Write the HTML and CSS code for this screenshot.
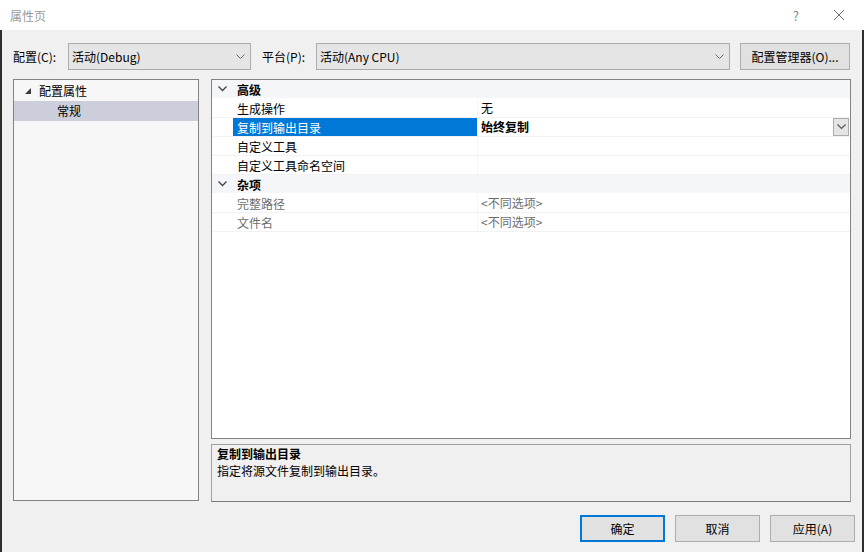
FILE: index.html
```html
<!DOCTYPE html>
<html>
  <head>
    <meta charset="utf-8" />
    <title>属性页</title>
    <link rel="stylesheet" href="styles.css">
  </head>
  <body>
    <!-- title bar -->
    <div class="titlebar">
      <span class="title">属性页</span>
      <span class="help">?</span>
      <svg class="close" width="12" height="12" viewBox="0 0 12 12">
        <path d="M1 1 L11 11 M11 1 L1 11" stroke="#6e6e6e" stroke-width="1" fill="none" />
      </svg>
    </div>

    <div class="dialog">
      <!-- configuration / platform -->
      <div class="config">
        <label class="config-label">配置(C):</label>
        <div class="combo combo-config">
          <span>活动(Debug)</span>
          <svg width="9" height="6" viewBox="0 0 9 6"><path d="M0.5 0.5 L4.5 4.5 L8.5 0.5" stroke="#6a6a6a" fill="none" /></svg>
        </div>
        <label class="config-label platform-label">平台(P):</label>
        <div class="combo combo-platform">
          <span>活动(Any CPU)</span>
          <svg width="9" height="6" viewBox="0 0 9 6"><path d="M0.5 0.5 L4.5 4.5 L8.5 0.5" stroke="#6a6a6a" fill="none" /></svg>
        </div>
        <button class="btn btn-manager">配置管理器(O)...</button>
      </div>

      <div class="main">
        <!-- left tree -->
        <div class="tree">
          <div class="tree-row">
            <svg class="tree-arrow" width="6" height="6" viewBox="0 0 6 6"><polygon points="6,0 6,6 0,6" fill="#3c3c3c" /></svg>
            <span>配置属性</span>
          </div>
          <div class="tree-row child selected">常规</div>
        </div>

        <div class="side">
          <!-- property grid -->
          <div class="grid">
            <div class="cat">
              <span class="gutter"><svg width="9" height="6" viewBox="0 0 9 6"><path d="M0.5 0.5 L4.5 4.5 L8.5 0.5" stroke="#444" stroke-width="1.3" fill="none" /></svg></span>
              <span class="cat-name">高级</span>
            </div>
            <div class="prop">
              <span class="gutter"></span>
              <span class="name">生成操作</span>
              <span class="value">无</span>
            </div>
            <div class="prop">
              <span class="gutter"></span>
              <span class="name active">复制到输出目录</span>
              <span class="value strong">
                <span class="value-text">始终复制</span>
                <span class="drop"><svg width="9" height="6" viewBox="0 0 9 6"><path d="M0.5 0.5 L4.5 4.5 L8.5 0.5" stroke="#555" stroke-width="1.2" fill="none" /></svg></span>
              </span>
            </div>
            <div class="prop">
              <span class="gutter"></span>
              <span class="name">自定义工具</span>
              <span class="value"></span>
            </div>
            <div class="prop">
              <span class="gutter"></span>
              <span class="name">自定义工具命名空间</span>
              <span class="value"></span>
            </div>
            <div class="cat">
              <span class="gutter"><svg width="9" height="6" viewBox="0 0 9 6"><path d="M0.5 0.5 L4.5 4.5 L8.5 0.5" stroke="#444" stroke-width="1.3" fill="none" /></svg></span>
              <span class="cat-name">杂项</span>
            </div>
            <div class="prop disabled">
              <span class="gutter"></span>
              <span class="name">完整路径</span>
              <span class="value">&lt;不同选项&gt;</span>
            </div>
            <div class="prop disabled">
              <span class="gutter"></span>
              <span class="name">文件名</span>
              <span class="value">&lt;不同选项&gt;</span>
            </div>
          </div>

          <!-- description -->
          <div class="desc">
            <div class="desc-title">复制到输出目录</div>
            <div class="desc-text">指定将源文件复制到输出目录。</div>
          </div>
        </div>
      </div>

      <div class="buttons">
        <button class="btn btn-default">确定</button>
        <button class="btn">取消</button>
        <button class="btn">应用(A)</button>
      </div>
    </div>
  </body>
</html>
```

FILE: styles.css
```css
body {
  font-family: "Noto Sans CJK SC", sans-serif;
  font-size: 12px;
  color: #000;
  margin: 0;
  width: 864px;
  height: 552px;
  overflow: hidden;
  background: #f0f0f0;
}
.titlebar {
  height: 30px;
  background: #fff;
  display: flex;
  align-items: center;
  padding: 0 0 0 10px;
  color: #9a9a9a;
}
.title {
  flex: 1;
}
.help {
  color: #8a8a8a;
  font-size: 13px;
  margin-right: 34px;
}
.close {
  margin-right: 19px;
}
.dialog {
  height: 522px;
  box-sizing: border-box;
  border-left: 2px solid #2e2e2e;
  border-right: 2px solid #2e2e2e;
  padding: 13px 11px 0 11px;
}
.config {
  display: flex;
  align-items: center;
  height: 27px;
}
.config-label {
  width: 55px;
}
.platform-label {
  margin-left: 11px;
  width: 54px;
}
.combo {
  height: 27px;
  box-sizing: border-box;
  border: 1px solid #acacac;
  background: #e5e5e5;
  display: flex;
  align-items: center;
  justify-content: space-between;
  padding: 0 5px 0 3px;
}
.combo-config {
  width: 183px;
}
.combo-platform {
  width: 414px;
}
.btn {
  font-family: inherit;
  font-size: 12px;
  color: #000;
  height: 27px;
  box-sizing: border-box;
  border: 1px solid #adadad;
  background: #e1e1e1;
  padding: 0;
}
.btn-manager {
  width: 110px;
  margin-left: 10px;
}
.main {
  display: flex;
  gap: 12px;
  margin-top: 9px;
}
.tree {
  width: 186px;
  height: 422px;
  box-sizing: border-box;
  border: 1px solid #828282;
  background: #f7f7f7;
  padding-top: 1px;
}
.tree-row {
  display: flex;
  align-items: center;
  height: 20px;
  line-height: 18px;
  padding-left: 11px;
}
.tree-arrow {
  margin-right: 8px;
}
.tree-row.child {
  padding-left: 43px;
}
.tree-row.selected {
  background: #cccedb;
}
.side {
  width: 640px;
  display: flex;
  flex-direction: column;
  gap: 5px;
}
.grid {
  height: 360px;
  box-sizing: border-box;
  border: 1px solid #828282;
  background: #fff;
}
.cat,
.prop {
  display: flex;
  height: 19px;
  line-height: 20px;
  box-sizing: border-box;
  border-bottom: 1px solid #f2f2f2;
}
.cat {
  background: #f4f6f9;
  border-bottom-color: #fff;
  font-weight: bold;
}
.gutter {
  width: 21px;
  display: flex;
  align-items: center;
  justify-content: center;
  flex: none;
}
.cat-name {
  padding-left: 4px;
}
.name {
  width: 245px;
  padding-left: 4px;
  box-sizing: border-box;
  flex: none;
  border-right: 1px solid #f6f6f6;
}
.name.active {
  background: #0078d7;
  color: #fff;
}
.value {
  flex: 1;
  display: flex;
  align-items: center;
  padding-left: 3px;
}
.value.strong {
  font-weight: bold;
}
.value-text {
  flex: 1;
}
.drop {
  width: 16px;
  height: 18px;
  box-sizing: border-box;
  border: 1px solid #acacac;
  background: #e5e5e5;
  display: flex;
  align-items: center;
  justify-content: center;
  margin-right: 1px;
}
.prop.disabled {
  color: #6d6d6d;
}
.desc {
  height: 58px;
  box-sizing: border-box;
  border: 1px solid #a0a0a0;
  border-bottom-color: #7a7a7a;
  background: #f0f0f0;
  padding: 0 5px;
  line-height: 17px;
}
.desc-title {
  font-weight: bold;
}
.buttons {
  display: flex;
  justify-content: flex-end;
  gap: 10px;
  margin-top: 13px;
  margin-right: -4px;
}
.buttons .btn {
  width: 85px;
}
.btn-default {
  border: 2px solid #0078d7;
}
```
